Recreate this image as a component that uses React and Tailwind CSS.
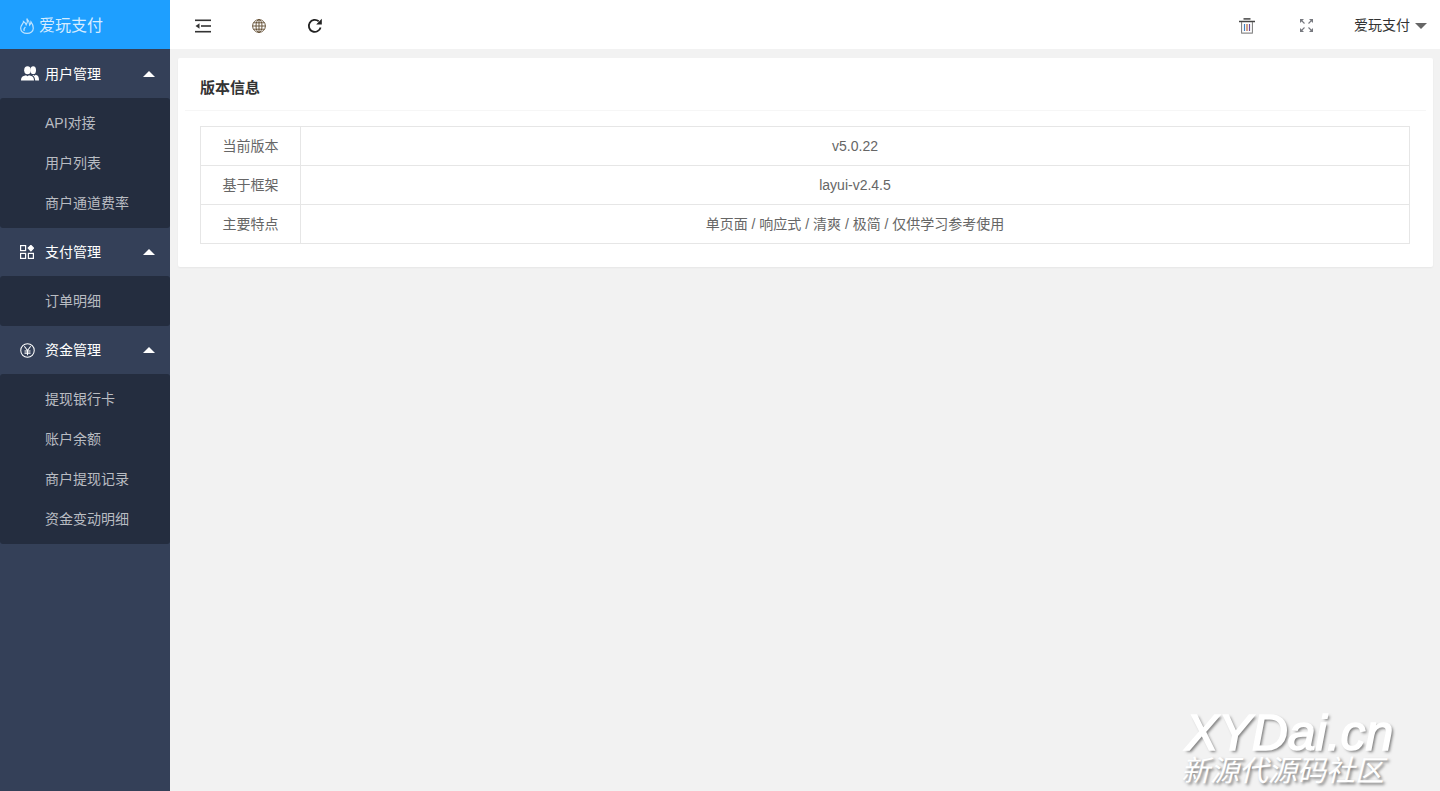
import React from 'react'

const font = { fontFamily: '"Liberation Sans", "Noto Sans CJK SC", sans-serif' }

function MenuUp() {
  return <span className="ml-auto mr-[15px] w-0 h-0 border-x-[6px] border-x-transparent border-b-[6px] border-b-white" />
}

function UsersIcon() {
  return (
    <svg className="ml-[6px]" width="18" height="15" viewBox="0 0 18 15" fill="#fff">
      <ellipse cx="6.500" cy="4.200" rx="3.300" ry="4" />
      <path d="M0 14.500c0-2.600 1-3.800 2.600-4.400L5 9.200l1.500 1 1.500-1 2.400.9c1.600.6 2.600 1.800 2.600 4.400z" />
      <ellipse cx="12.200" cy="4.200" rx="2.800" ry="3.900" />
      <path d="M12.400 8.800l1.200.9 1.100-.9 1.100.5c1.400.6 2.200 1.800 2.200 5.200h-3.800c-.1-2.700-1.100-4.300-2.800-5.200z" />
    </svg>
  )
}

function AppsIcon() {
  return (
    <svg width="14" height="14" viewBox="0 0 14 14" fill="none" stroke="#fff" strokeWidth="1.200">
      <rect x=".6" y=".6" width="5" height="5" />
      <rect x=".6" y="8.400" width="5" height="5" />
      <rect x="8.400" y="8.400" width="5" height="5" />
      <path d="M10.900 .4l2.700 2.700-2.700 2.700-2.700-2.700z" fill="#fff" />
    </svg>
  )
}

function YenIcon() {
  return (
    <svg width="15" height="15" viewBox="0 0 16 16" fill="none" stroke="#fff" strokeWidth="1.100">
      <circle cx="8" cy="8" r="7.200" />
      <path d="M4.600 3.500L8 8l3.400-4.500M8 8v5M4.800 8.600h6.400M4.800 10.800h6.400" />
    </svg>
  )
}

function FlameIcon() {
  return (
    <svg width="14" height="16" viewBox="0 0 14 16" fill="none" stroke="#bfe3ff" strokeWidth="1.200">
      <path d="M6.800 .6c1.100 2.500.4 4.600-.6 6.200C5.700 5.400 4.900 4.300 3.500 3.400 3.700 5.600.7 7 .7 10.300c0 3 2.700 5 6.300 5s6.300-2 6.300-5c0-2.300-.9-4.600-2.300-6.400-.1 1.400-.5 2.400-1.300 3.200C9.500 4.700 8.600 2.300 6.800 .6z" />
      <path d="M4.200 13c-.7-1.900.3-3.200 1.200-4" />
    </svg>
  )
}

function ShrinkIcon() {
  return (
    <svg width="16" height="14" viewBox="0 0 16 14" fill="#333">
      <rect x="0" y="0.500" width="16" height="1.600" />
      <rect x="6" y="6.200" width="10" height="1.600" />
      <rect x="0" y="11.900" width="16" height="1.600" />
      <path d="M4.500 4.200v5.600L0.500 7z" />
    </svg>
  )
}

function GlobeIcon() {
  return (
    <svg width="14" height="14" viewBox="0 0 14 14" fill="none" stroke="#5f4a2e" strokeWidth="0.900">
      <circle cx="7" cy="7" r="6.400" />
      <ellipse cx="7" cy="7" rx="3" ry="6.400" />
      <path d="M7 .6v12.800M.6 7h12.800M1.500 3.800h11M1.500 10.200h11" />
    </svg>
  )
}

function RefreshIcon() {
  return (
    <svg width="16" height="16" viewBox="0 0 16 16" fill="none">
      <path d="M13.600 9.500A6 6 0 1 1 11.700 3.300" stroke="#222" strokeWidth="1.800" />
      <path d="M14.800 .8v5.600H9.200z" fill="#222" />
    </svg>
  )
}

function TrashIcon() {
  return (
    <svg width="16" height="16" viewBox="0 0 16 16" fill="none" stroke="#444" strokeWidth="1">
      <path d="M0 3.500h16" strokeWidth="1.500" />
      <path d="M4.500 .9h7" strokeWidth="1.500" />
      <path d="M2.600 4v11.300h10.800V4" stroke="#777" />
      <path d="M5.500 6v7" stroke="#3f7fc0" strokeWidth="1.200" />
      <path d="M8 6v7" stroke="#b5653a" strokeWidth="1.200" />
      <path d="M10.500 6v7" stroke="#6a4f9c" strokeWidth="1.200" />
      <path d="M2.600 15.200h10.800" stroke="#aaa" strokeWidth="1.500" />
    </svg>
  )
}

function ExpandIcon() {
  return (
    <svg width="13" height="13" viewBox="0 0 13 13" fill="none" stroke="#77797f" strokeWidth="1.100">
      <path d="M1 1l3.500 3.500M12 1L8.500 4.500M1 12l3.500-3.500M12 12L8.500 8.500" />
      <path d="M0 0h4L0 4zM13 0H9l4 4zM0 13h4l-4-4zM13 13H9l4-4z" fill="#77797f" stroke="none" />
    </svg>
  )
}

function MenuGroup({ icon, title, items, height }) {
  return (
    <div>
      <div className={`flex items-center text-sm text-white ${height}`}>
        <span className="w-[45px] flex justify-center pl-[9px]">{icon}</span>
        <span>{title}</span>
        <MenuUp />
      </div>
      <div className="bg-[#242d3f] rounded-[3px] py-[5px]">
        {items.map(item => (
          <div key={item} className="h-10 leading-10 pl-[45px] text-sm text-[#b9bcc2]">{item}</div>
        ))}
      </div>
    </div>
  )
}

function Row({ label, value }) {
  return (
    <tr>
      <td className="w-[100px] h-[39px] border border-[#e6e6e6] text-center text-sm text-[#666]">{label}</td>
      <td className="h-[39px] border border-[#e6e6e6] text-center text-sm text-[#666]">{value}</td>
    </tr>
  )
}

export default function App() {
  return (
    <div className="relative flex h-[791px] overflow-hidden bg-[#f2f2f2]" style={font}>
      {/* Sidebar */}
      <aside className="w-[170px] shrink-0 bg-[#344058] flex flex-col">
        <div className="h-[49px] bg-[#1e9fff] flex items-center pl-5 pt-[3px] gap-[5px] text-base text-[#d6ecff]">
          <FlameIcon />
          <span>爱玩支付</span>
        </div>
        <MenuGroup icon={<UsersIcon />} title="用户管理" height="h-[49px]" items={['API对接', '用户列表', '商户通道费率']} />
        <MenuGroup icon={<AppsIcon />} title="支付管理" height="h-[48px]" items={['订单明细']} />
        <MenuGroup icon={<YenIcon />} title="资金管理" height="h-[48px]" items={['提现银行卡', '账户余额', '商户提现记录', '资金变动明细']} />
      </aside>

      {/* Main */}
      <main className="flex-1 min-w-0 flex flex-col">
        <header className="h-[49px] bg-white flex items-center pt-[3px]">
          <div className="flex items-center pl-[25px]">
            <span className="w-4 flex justify-center"><ShrinkIcon /></span>
            <span className="ml-10 w-4 flex justify-center"><GlobeIcon /></span>
            <span className="ml-10 w-4 flex justify-center"><RefreshIcon /></span>
          </div>
          <div className="ml-auto flex items-center pr-[13px]">
            <TrashIcon />
            <span className="ml-[45px] flex -mt-[1px]"><ExpandIcon /></span>
            <span className="ml-[41px] text-sm leading-none -mt-[3px] text-[#333]">爱玩支付</span>
            <span className="ml-[5px] -mt-[1px] w-0 h-0 border-x-[6px] border-x-transparent border-t-[6px] border-t-[#666]" />
          </div>
        </header>

        <div className="pl-2 pr-[7px] pt-[9px]">
          <section className="bg-white rounded-[2px] shadow-[0_1px_2px_0_rgba(0,0,0,0.05)]">
            <div className="h-[53px] mx-[7px] px-[15px] pt-2 flex items-center border-b border-[#f6f6f6] text-[15px] font-bold text-[#333]">版本信息</div>
            <div className="pl-[22px] pr-[23px] pt-[15px] pb-[23px]">
              <table className="w-full border-collapse">
                <tbody>
                  <Row label="当前版本" value="v5.0.22" />
                  <Row label="基于框架" value="layui-v2.4.5" />
                  <Row label="主要特点" value="单页面 / 响应式 / 清爽 / 极简 / 仅供学习参考使用" />
                </tbody>
              </table>
            </div>
          </section>
        </div>
      </main>

      {/* Watermark */}
      <div className="absolute left-[1181px] top-[704px] text-white select-none [text-shadow:2px_2px_3px_rgba(0,0,0,0.5)]">
        <div className="text-[50px] leading-[58px] italic [-webkit-text-stroke:1.500px_white] whitespace-nowrap ml-1">XYDai.cn</div>
        <div className="text-[29px] leading-[30px] italic -mt-[6px] whitespace-nowrap">新源代源码社区</div>
      </div>
    </div>
  )
}
